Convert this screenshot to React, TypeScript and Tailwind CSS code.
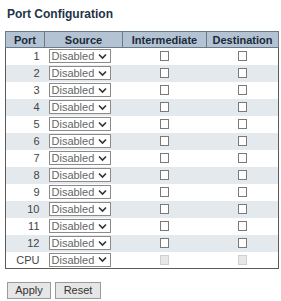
import React from "react";

const ports = ["1","2","3","4","5","6","7","8","9","10","11","12","CPU"];

function Chevron() {
  return (
    <svg width="9" height="7" viewBox="0 0 9 7" className="shrink-0">
      <path d="M1 1.5 L4.5 5 L8 1.5" fill="none" stroke="#333" strokeWidth="1.6" />
    </svg>
  );
}

export default function App() {
  return (
    <div className="w-[281px] h-[301px] bg-white text-[11px] text-[#444]" style={{ fontFamily: '"Liberation Sans", Arial, sans-serif' }}>
      <div className="pl-[7px] pt-[7px] h-[31px] text-[12px] font-bold text-[#1e3447] leading-[14px]">Port Configuration</div>
      <table className="ml-[5px] border-collapse border border-[#5a5a5a] w-[273px] table-fixed">
        <colgroup>
          <col className="w-[39px]" />
          <col className="w-[78px]" />
          <col className="w-[84px]" />
          <col className="w-[72px]" />
        </colgroup>
        <thead>
          <tr className="h-[16px] bg-[#b3c3d3] text-[#1b2a38] font-bold text-[11px]">
            <th className="border border-[#6d7a86] p-0 leading-[14px]">Port</th>
            <th className="border border-[#6d7a86] p-0 leading-[14px]">Source</th>
            <th className="border border-[#6d7a86] p-0 leading-[14px]">Intermediate</th>
            <th className="border border-[#6d7a86] p-0 leading-[14px]">Destination</th>
          </tr>
        </thead>
        <tbody>
          {ports.map((p, i) => (
            <tr key={p} className={i % 2 === 1 ? "h-[17px] bg-[#e4e9ee]" : "h-[17px] bg-white"}>
              <td className="p-0 pr-[5px] text-right text-[#444]">{p}</td>
              <td className="p-0 pl-[4px]">
                <div className="flex items-center justify-between w-[62px] h-[14px] border border-[#8a8a8a] bg-white pl-[2px] pr-[3px] text-[11px] text-[#666] leading-[12px]">
                  <span>Disabled</span>
                  <Chevron />
                </div>
              </td>
              <td className="p-0">
                <div className="flex justify-center">
                  <div className={p === "CPU" ? "w-[9px] h-[10px] border border-[#cfcfcf] bg-[#e8e8e8]" : "w-[9px] h-[10px] border border-[#7a7a7a] bg-white"} />
                </div>
              </td>
              <td className="p-0">
                <div className="flex justify-center">
                  <div className={p === "CPU" ? "w-[9px] h-[10px] border border-[#cfcfcf] bg-[#e8e8e8]" : "w-[9px] h-[10px] border border-[#7a7a7a] bg-white"} />
                </div>
              </td>
            </tr>
          ))}
        </tbody>
      </table>
      <div className="flex gap-[4px] pl-[7px] pt-[13px]">
        <button className="w-[44px] h-[17px] border border-[#9a9a9a] bg-[#e6e6e6] text-[11px] text-[#333] leading-[15px]">Apply</button>
        <button className="w-[46px] h-[17px] border border-[#9a9a9a] bg-[#e6e6e6] text-[11px] text-[#333] leading-[15px]">Reset</button>
      </div>
    </div>
  );
}
